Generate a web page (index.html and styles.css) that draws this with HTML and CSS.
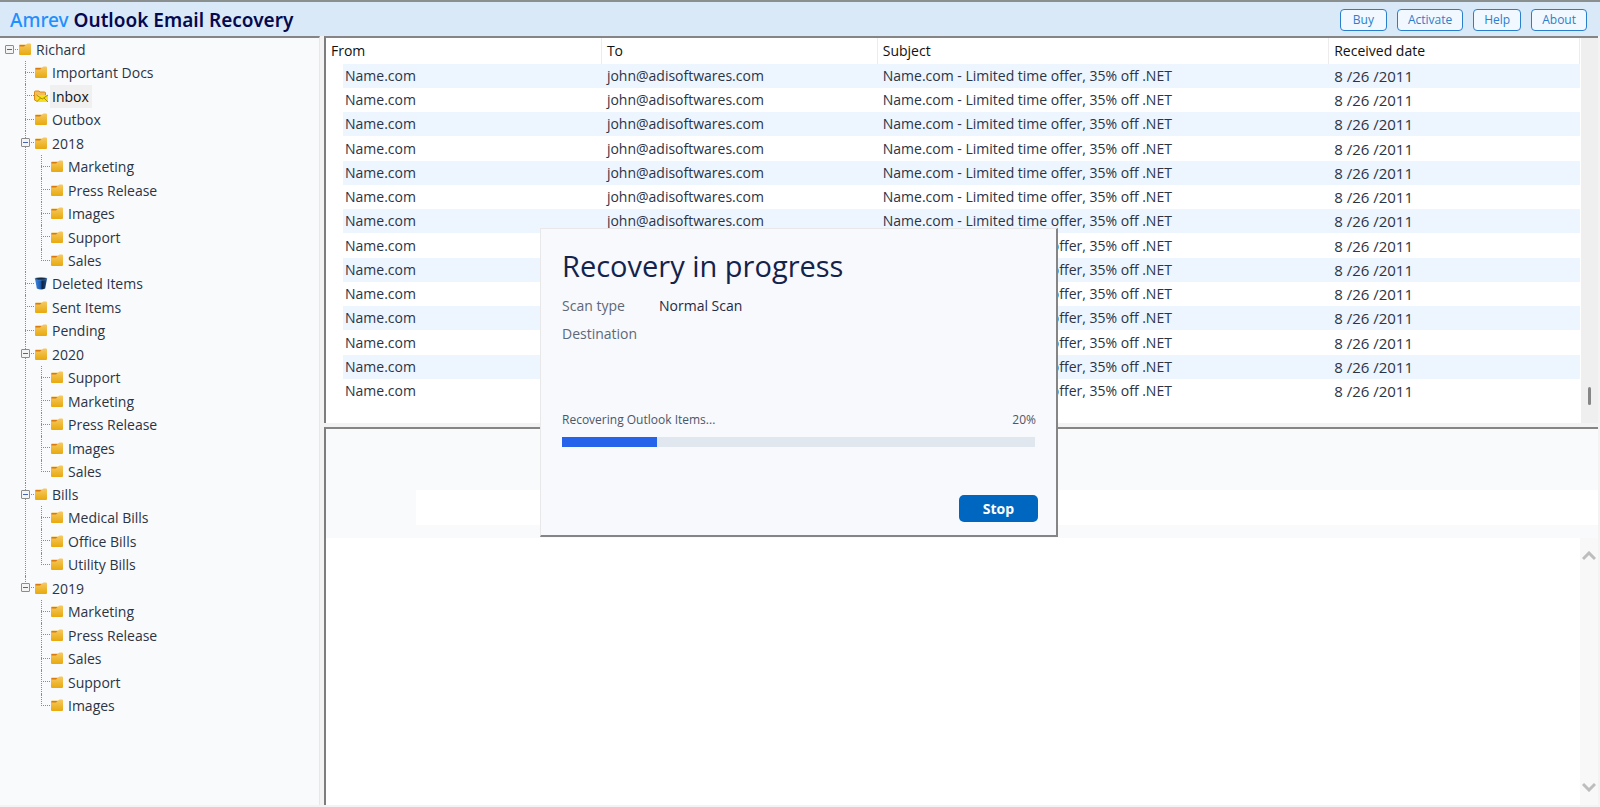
FILE: index.html
```html
<!DOCTYPE html>
<html lang="en">
  <head>
    <meta charset="UTF-8" />
    <meta name="viewport" content="width=device-width, initial-scale=1.0" />
    <title>Amrev Outlook Email Recovery</title>
    <link rel="stylesheet" href="styles.css">
  </head>
  <body>
    <svg class="sprite" aria-hidden="true">
      <defs>
        <linearGradient id="gold" x1="0" y1="0" x2="0" y2="1">
          <stop offset="0" stop-color="#f6c964" />
          <stop offset="1" stop-color="#e8a90c" />
        </linearGradient>
        <linearGradient id="bin" x1="0" y1="0" x2="1" y2="0">
          <stop offset="0" stop-color="#3f86e0" />
          <stop offset="0.45" stop-color="#1c5cb0" />
          <stop offset="0.6" stop-color="#10233f" />
          <stop offset="1" stop-color="#1d4f92" />
        </linearGradient>
      </defs>
      <symbol id="folder" viewBox="0 0 14 13">
        <path d="M1 2.500 Q1 1.500 2 1.500 H8 L9.500 0.500 H12 Q13 0.500 13 1.500 V11 Q13 12 12 12 H2 Q1 12 1 11Z" fill="url(#gold)" />
        <path d="M1.500 2 H7.500 L6 3.500 H1.500Z" fill="#d97a10" />
      </symbol>
      <symbol id="inbox" viewBox="0 0 14 13">
        <path d="M0.500 10 V2 Q0.500 1 1.500 1 H5 L6 2 H10.500 Q11.500 2 11.500 3 V6 H4 V10.500 H1Z" fill="#f6bd55" stroke="#d98a1c" stroke-width="1" />
        <rect x="2.500" y="5" width="11.500" height="7" fill="#f7e017" />
        <path d="M2.500 5 L8.200 9 L14 5 M2.500 12 L6.500 8 M14 12 L10 8" fill="none" stroke="#a88f00" stroke-width="1" />
      </symbol>
      <symbol id="trash" viewBox="0 0 14 13">
        <path d="M1 1.500 L2.800 11.500 Q7 13.500 11.200 11.500 L13 1.500Z" fill="url(#bin)" />
        <ellipse cx="7" cy="1.800" rx="6" ry="1.300" fill="#16283f" stroke="#4a90d9" stroke-width="0.600" />
      </symbol>
    </svg>

    <header class="titlebar">
      <h1><span>Amrev</span> Outlook Email Recovery</h1>
      <nav class="actions">
        <button type="button">Buy</button>
        <button type="button">Activate</button>
        <button type="button">Help</button>
        <button type="button">About</button>
      </nav>
    </header>

    <div class="workspace">
      <aside class="sidebar">
        <ul class="tree">
          <li>
            <div class="node"><button class="toggle" type="button" aria-label="Collapse Richard"></button><svg class="icon"><use href="#folder" /></svg><span>Richard</span></div>
            <ul>
              <li><div class="node"><svg class="icon"><use href="#folder" /></svg><span>Important Docs</span></div></li>
              <li><div class="node selected"><svg class="icon"><use href="#inbox" /></svg><span>Inbox</span></div></li>
              <li><div class="node"><svg class="icon"><use href="#folder" /></svg><span>Outbox</span></div></li>
              <li>
                <div class="node"><button class="toggle" type="button" aria-label="Collapse 2018"></button><svg class="icon"><use href="#folder" /></svg><span>2018</span></div>
                <ul>
                  <li><div class="node"><svg class="icon"><use href="#folder" /></svg><span>Marketing</span></div></li>
                  <li><div class="node"><svg class="icon"><use href="#folder" /></svg><span>Press Release</span></div></li>
                  <li><div class="node"><svg class="icon"><use href="#folder" /></svg><span>Images</span></div></li>
                  <li><div class="node"><svg class="icon"><use href="#folder" /></svg><span>Support</span></div></li>
                  <li><div class="node"><svg class="icon"><use href="#folder" /></svg><span>Sales</span></div></li>
                </ul>
              </li>
              <li><div class="node"><svg class="icon"><use href="#trash" /></svg><span>Deleted Items</span></div></li>
              <li><div class="node"><svg class="icon"><use href="#folder" /></svg><span>Sent Items</span></div></li>
              <li><div class="node"><svg class="icon"><use href="#folder" /></svg><span>Pending</span></div></li>
              <li>
                <div class="node"><button class="toggle" type="button" aria-label="Collapse 2020"></button><svg class="icon"><use href="#folder" /></svg><span>2020</span></div>
                <ul>
                  <li><div class="node"><svg class="icon"><use href="#folder" /></svg><span>Support</span></div></li>
                  <li><div class="node"><svg class="icon"><use href="#folder" /></svg><span>Marketing</span></div></li>
                  <li><div class="node"><svg class="icon"><use href="#folder" /></svg><span>Press Release</span></div></li>
                  <li><div class="node"><svg class="icon"><use href="#folder" /></svg><span>Images</span></div></li>
                  <li><div class="node"><svg class="icon"><use href="#folder" /></svg><span>Sales</span></div></li>
                </ul>
              </li>
              <li>
                <div class="node"><button class="toggle" type="button" aria-label="Collapse Bills"></button><svg class="icon"><use href="#folder" /></svg><span>Bills</span></div>
                <ul>
                  <li><div class="node"><svg class="icon"><use href="#folder" /></svg><span>Medical Bills</span></div></li>
                  <li><div class="node"><svg class="icon"><use href="#folder" /></svg><span>Office Bills</span></div></li>
                  <li><div class="node"><svg class="icon"><use href="#folder" /></svg><span>Utility Bills</span></div></li>
                </ul>
              </li>
              <li>
                <div class="node"><button class="toggle" type="button" aria-label="Collapse 2019"></button><svg class="icon"><use href="#folder" /></svg><span>2019</span></div>
                <ul>
                  <li><div class="node"><svg class="icon"><use href="#folder" /></svg><span>Marketing</span></div></li>
                  <li><div class="node"><svg class="icon"><use href="#folder" /></svg><span>Press Release</span></div></li>
                  <li><div class="node"><svg class="icon"><use href="#folder" /></svg><span>Sales</span></div></li>
                  <li><div class="node"><svg class="icon"><use href="#folder" /></svg><span>Support</span></div></li>
                  <li><div class="node"><svg class="icon"><use href="#folder" /></svg><span>Images</span></div></li>
                </ul>
              </li>
            </ul>
          </li>
        </ul>
      </aside>

      <main class="content">
        <section class="mail-list">
          <div class="mail-scroll">
            <table>
              <colgroup>
                <col class="col-from" />
                <col class="col-to" />
                <col class="col-subject" />
                <col class="col-date" />
              </colgroup>
              <thead>
                <tr><th>From</th><th>To</th><th>Subject</th><th>Received date</th></tr>
              </thead>
              <tbody>
                <tr><td>Name.com</td><td>john@adisoftwares.com</td><td>Name.com - Limited time offer, 35% off .NET</td><td>8 /26 /2011</td></tr>
                <tr><td>Name.com</td><td>john@adisoftwares.com</td><td>Name.com - Limited time offer, 35% off .NET</td><td>8 /26 /2011</td></tr>
                <tr><td>Name.com</td><td>john@adisoftwares.com</td><td>Name.com - Limited time offer, 35% off .NET</td><td>8 /26 /2011</td></tr>
                <tr><td>Name.com</td><td>john@adisoftwares.com</td><td>Name.com - Limited time offer, 35% off .NET</td><td>8 /26 /2011</td></tr>
                <tr><td>Name.com</td><td>john@adisoftwares.com</td><td>Name.com - Limited time offer, 35% off .NET</td><td>8 /26 /2011</td></tr>
                <tr><td>Name.com</td><td>john@adisoftwares.com</td><td>Name.com - Limited time offer, 35% off .NET</td><td>8 /26 /2011</td></tr>
                <tr><td>Name.com</td><td>john@adisoftwares.com</td><td>Name.com - Limited time offer, 35% off .NET</td><td>8 /26 /2011</td></tr>
                <tr><td>Name.com</td><td>john@adisoftwares.com</td><td>Name.com - Limited time offer, 35% off .NET</td><td>8 /26 /2011</td></tr>
                <tr><td>Name.com</td><td>john@adisoftwares.com</td><td>Name.com - Limited time offer, 35% off .NET</td><td>8 /26 /2011</td></tr>
                <tr><td>Name.com</td><td>john@adisoftwares.com</td><td>Name.com - Limited time offer, 35% off .NET</td><td>8 /26 /2011</td></tr>
                <tr><td>Name.com</td><td>john@adisoftwares.com</td><td>Name.com - Limited time offer, 35% off .NET</td><td>8 /26 /2011</td></tr>
                <tr><td>Name.com</td><td>john@adisoftwares.com</td><td>Name.com - Limited time offer, 35% off .NET</td><td>8 /26 /2011</td></tr>
                <tr><td>Name.com</td><td>john@adisoftwares.com</td><td>Name.com - Limited time offer, 35% off .NET</td><td>8 /26 /2011</td></tr>
                <tr><td>Name.com</td><td>john@adisoftwares.com</td><td>Name.com - Limited time offer, 35% off .NET</td><td>8 /26 /2011</td></tr>
              </tbody>
            </table>
          </div>
          <div class="list-scrollbar"><span class="thumb"></span></div>
        </section>

        <section class="preview">
          <div class="preview-head">
            <input type="text" aria-label="Subject" />
          </div>
          <div class="preview-body">
            <div class="preview-scrollbar">
              <button type="button" aria-label="Scroll up"><svg viewBox="0 0 14 10"><path d="M1 8 L7 2 L13 8" /></svg></button>
              <button type="button" aria-label="Scroll down"><svg viewBox="0 0 14 10"><path d="M1 2 L7 8 L13 2" /></svg></button>
            </div>
          </div>
        </section>
      </main>
    </div>

    <div class="dialog" role="dialog" aria-labelledby="dialog-title">
      <h2 id="dialog-title">Recovery in progress</h2>
      <dl>
        <dt>Scan type</dt>
        <dd>Normal Scan</dd>
        <dt>Destination</dt>
        <dd></dd>
      </dl>
      <div class="status">
        <label for="progress">Recovering Outlook Items...</label>
        <span>20%</span>
      </div>
      <progress id="progress" max="100" value="20"></progress>
      <button class="stop" type="button">Stop</button>
    </div>
  </body>
</html>
```
FILE: styles.css
```css
* {
  box-sizing: border-box;
}
body {
  margin: 0;
  min-height: 100vh;
  display: flex;
  flex-direction: column;
  font-family: "Open Sans", "Noto Sans", sans-serif;
  font-size: 14px;
  color: #2b3445;
  background-color: #fff;
}
button,
input {
  font-family: inherit;
}
.sprite {
  position: absolute;
  width: 0;
  height: 0;
}

/* title bar */
.titlebar {
  display: flex;
  justify-content: space-between;
  align-items: center;
  height: 36px;
  padding: 2px 13px 0 10px;
  border-top: 2px solid #8a8f8f;
  background-color: #dae9f8;
}
.titlebar h1 {
  margin: 0;
  font-family: "Noto Sans", sans-serif;
  font-size: 19px;
  font-weight: 600;
  line-height: 30px;
  color: #050a50;
}
.titlebar h1 span {
  font-weight: 500;
  color: #1e90ff;
}
.actions {
  display: flex;
  gap: 10px;
}
.actions button {
  min-width: 47px;
  height: 22px;
  padding: 0 10px;
  border: 1px solid #2a7fcc;
  border-radius: 4px;
  background-color: #f2f8ff;
  color: #2a7fcc;
  font-size: 12px;
  line-height: 20px;
}

/* split panes */
.workspace {
  flex: 1;
  display: flex;
  gap: 4px;
  padding: 0 2px 2px 0;
  background-color: #f3f3f3;
}
.sidebar {
  flex: none;
  width: 320px;
  border-top: 2px solid #858585;
  border-right: 1px solid #e8e8e8;
  background-color: #f9fafc;
}
.content {
  flex: 1;
  min-width: 0;
  display: flex;
  flex-direction: column;
  gap: 4px;
}

/* folder tree */
.tree,
.tree ul {
  margin: 0;
  padding: 0;
  list-style: none;
}
.tree {
  padding-left: 5px;
}
.tree ul {
  padding-left: 16px;
}
.tree li {
  position: relative;
}
.node {
  display: flex;
  align-items: center;
  height: 23px;
  padding-left: 13px;
}
.tree ul > li:nth-child(even) > .node {
  height: 24px;
}
.node span {
  padding: 0 3px 0 2px;
  margin-left: 2px;
  line-height: 23px;
}
.node.selected span {
  background-color: #f0f0f0;
  color: #111;
}
.icon {
  width: 14px;
  height: 13px;
}
.tree ul > li::before {
  content: "";
  position: absolute;
  top: 0;
  bottom: 0;
  left: 4px;
  border-left: 1px dotted #8c8c8c;
}
.tree ul > li:last-child::before {
  bottom: auto;
  height: 12px;
}
.node::before {
  content: "";
  position: absolute;
  top: 11px;
  left: 4px;
  width: 9px;
  border-top: 1px dotted #8c8c8c;
}
.toggle {
  position: absolute;
  top: 7px;
  left: 0;
  width: 9px;
  height: 9px;
  padding: 0;
  border: 1px solid #8c8c8c;
  border-radius: 1px;
  background: linear-gradient(#4b63b5, #4b63b5) center / 5px 1px no-repeat #f4f4f4;
}

/* message list */
.mail-list {
  display: flex;
  height: 387px;
  border-top: 2px solid #858585;
  border-left: 2px solid #7d7d7d;
  background-color: #fff;
}
.mail-scroll {
  flex: 1;
  padding-right: 1px;
  overflow: hidden;
}
.mail-list table {
  width: 100%;
  table-layout: fixed;
  border-collapse: separate;
  border-spacing: 0;
}
.col-from {
  width: 22%;
}
.col-to {
  width: 22%;
}
.col-subject {
  width: 36%;
}
.mail-list th,
.mail-list td {
  height: 24px;
  padding: 0 5px;
  line-height: 24px;
  text-align: left;
  white-space: nowrap;
}
.mail-list th {
  height: 26px;
  border-right: 1px solid #ececec;
  font-weight: 400;
  color: #111;
}
.mail-list td:first-child {
  padding-left: 2px;
  border-left: 17px solid #fff;
}
.mail-list td:last-child {
  font-size: 15px;
}
.mail-list tbody tr:nth-child(odd) {
  background-color: #edf5ff;
}
.mail-list tbody tr:nth-child(4n) td {
  height: 25px;
}
.list-scrollbar {
  display: flex;
  justify-content: center;
  align-items: flex-end;
  width: 17px;
  padding-bottom: 18px;
  background-color: #efefef;
}
.thumb {
  width: 3px;
  height: 18px;
  border-radius: 2px;
  background-color: #868686;
}

/* message preview */
.preview {
  flex: 1;
  display: flex;
  flex-direction: column;
  border-top: 2px solid #858585;
  border-left: 2px solid #7d7d7d;
}
.preview-head {
  padding: 61px 0 13px 90px;
  background-color: #f9fafc;
}
.preview-head input {
  display: block;
  width: 100%;
  height: 35px;
  border: none;
  background-color: #fff;
}
.preview-body {
  flex: 1;
  display: flex;
  justify-content: flex-end;
  background-color: #fff;
}
.preview-scrollbar {
  display: flex;
  flex-direction: column;
  justify-content: space-between;
  width: 18px;
  padding: 13px 0;
  background-color: #f8f8f8;
}
.preview-scrollbar button {
  padding: 0 2px;
  border: none;
  background: none;
  line-height: 0;
}
.preview-scrollbar svg {
  width: 14px;
  height: 10px;
  fill: none;
  stroke: #bdbdbd;
  stroke-width: 3;
}

/* recovery dialog */
.dialog {
  position: absolute;
  top: 228px;
  left: calc(50% - 260px);
  display: flex;
  flex-direction: column;
  width: 518px;
  padding: 17px 18px 13px 21px;
  border: 1px solid #e8e8e8;
  border-right: 2px solid #858585;
  border-bottom: 2px solid #858585;
  background-color: #f7f9fd;
}
.dialog h2 {
  margin: 0;
  font-size: 29px;
  font-weight: 400;
  line-height: 40px;
  color: #14234b;
}
.dialog dl {
  display: grid;
  grid-template-columns: 97px 1fr;
  grid-auto-rows: 28px;
  margin: 6px 0 62px;
  line-height: 28px;
}
.dialog dt {
  color: #5d6878;
}
.dialog dd {
  margin: 0;
  color: #1f2a44;
}
.status {
  display: flex;
  justify-content: space-between;
  padding-right: 2px;
  font-size: 12px;
  line-height: 20px;
  color: #4b5668;
}
.dialog progress {
  appearance: none;
  width: 473px;
  height: 10px;
  margin: 7px 0 48px;
  border: none;
}
.dialog progress::-webkit-progress-bar {
  background-color: #e1e7ef;
}
.dialog progress::-webkit-progress-value {
  background-color: #2563eb;
}
.stop {
  align-self: flex-end;
  width: 79px;
  height: 27px;
  border: none;
  border-radius: 5px;
  background-color: #0067c0;
  color: #fff;
  font-size: 14px;
  font-weight: 700;
}
```
